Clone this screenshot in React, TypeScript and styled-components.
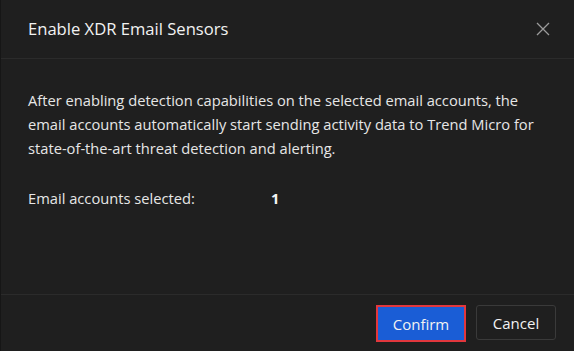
import styled, { createGlobalStyle } from 'styled-components';

const GlobalStyle = createGlobalStyle`
	html,
	body {
		margin: 0;
		padding: 0;
		background: #1f1f1f;
	}
	body {
		font-family: 'Open Sans', 'Noto Sans', sans-serif;
		-webkit-font-smoothing: antialiased;
	}
	* {
		box-sizing: border-box;
	}
`;

const App = () => {
	return (
		<>
			<GlobalStyle />
			<Dialog>
				<Header>
					<Title>Enable XDR Email Sensors</Title>
					<CloseButton aria-label="Close">
						<svg width="14" height="14" viewBox="0 0 14 14">
							<path d="M1 1 L13 13 M13 1 L1 13" stroke="#9b9b9b" strokeWidth="1.3" fill="none" />
						</svg>
					</CloseButton>
				</Header>
				<Body>
					<Description>
						After enabling detection capabilities on the selected email accounts, the email accounts
						automatically start sending activity data to Trend Micro for state-of-the-art threat detection and
						alerting.
					</Description>
					<InfoRow>
						<span>Email accounts selected:</span>
						<InfoValue>1</InfoValue>
					</InfoRow>
				</Body>
				<Footer>
					<Highlight>
						<Button $primary>Confirm</Button>
					</Highlight>
					<Button>Cancel</Button>
				</Footer>
			</Dialog>
		</>
	);
};

export default App;

const Dialog = styled.div`
	width: 574px;
	height: 351px;
	display: flex;
	flex-direction: column;
	background: #1f1f1f;
	border-left: 1px solid #161616;
	color: #e6e6e6;
`;

const Header = styled.div`
	height: 59px;
	display: flex;
	align-items: center;
	justify-content: space-between;
	padding: 0 24px 0 27px;
	border-bottom: 1px solid #2b2b2b;
`;

const Title = styled.h1`
	margin: 0;
	margin-top: -1px;
	font-size: 16.6px;
	font-weight: 400;
	color: #f2f2f2;
`;

const CloseButton = styled.button`
	display: flex;
	padding: 0;
	border: none;
	background: none;
	cursor: pointer;
`;

const Body = styled.div`
	flex: 1;
	padding: 29px 26px 0 27px;
	font-size: 14.7px;
	line-height: 24.2px;
`;

const Description = styled.p`
	margin: 0 0 25px;
	color: #e6e6e6;
`;

const InfoRow = styled.div`
	display: grid;
	grid-template-columns: 243px 1fr;
`;

const InfoValue = styled.span`
	font-weight: 700;
	color: #f5f5f5;
`;

const Footer = styled.div`
	height: 57px;
	display: flex;
	justify-content: flex-end;
	align-items: flex-start;
	gap: 10px;
	padding: 10px 18px 0 0;
	border-top: 1px solid #2b2b2b;
`;

const Highlight = styled.div`
	border: 2px solid #e2373d;
	display: flex;
`;

const Button = styled.button<{ $primary?: boolean }>`
	height: ${({ $primary }) => ($primary ? '33px' : '35px')};
	width: ${({ $primary }) => ($primary ? '86px' : '80px')};
	padding: 0;
	font-family: inherit;
	font-size: 15px;
	color: #f2f2f2;
	border-radius: ${({ $primary }) => ($primary ? '0' : '3px')};
	border: ${({ $primary }) => ($primary ? 'none' : '1px solid #3a3a3a')};
	background: ${({ $primary }) => ($primary ? '#1a5dd6' : '#1f1f1f')};
	cursor: pointer;
`;
